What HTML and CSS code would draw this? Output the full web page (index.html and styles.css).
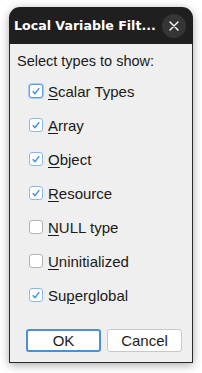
FILE: index.html
```html
<!DOCTYPE html>
<html>
<head>
<meta charset="utf-8">
<link rel="stylesheet" href="styles.css">
</head>
<body>
<div class="window">
  <div class="titlebar">
    <span class="title">Local Variable Filt...</span>
    <span class="close"><svg width="10" height="10" viewBox="0 0 10 10"><path d="M1 1 L9 9 M9 1 L1 9" stroke="#fff" stroke-width="1.4" stroke-linecap="round"/></svg></span>
  </div>
  <div class="body">
    <div class="prompt">Select types to show:</div>
    <div class="list">
      <div class="row"><span class="box checked focus"><svg viewBox="0 0 14 14"><path d="M3.2 7.2 L5.8 10 L10.8 3.6" fill="none" stroke="#3a8ee6" stroke-width="1.6"/></svg></span><span class="label"><u>S</u>calar Types</span></div>
      <div class="row"><span class="box checked"><svg viewBox="0 0 14 14"><path d="M3.2 7.2 L5.8 10 L10.8 3.6" fill="none" stroke="#3a8ee6" stroke-width="1.6"/></svg></span><span class="label"><u>A</u>rray</span></div>
      <div class="row"><span class="box checked"><svg viewBox="0 0 14 14"><path d="M3.2 7.2 L5.8 10 L10.8 3.6" fill="none" stroke="#3a8ee6" stroke-width="1.6"/></svg></span><span class="label"><u>O</u>bject</span></div>
      <div class="row"><span class="box checked"><svg viewBox="0 0 14 14"><path d="M3.2 7.2 L5.8 10 L10.8 3.6" fill="none" stroke="#3a8ee6" stroke-width="1.6"/></svg></span><span class="label"><u>R</u>esource</span></div>
      <div class="row"><span class="box"></span><span class="label"><u>N</u>ULL type</span></div>
      <div class="row"><span class="box"></span><span class="label"><u>U</u>ninitialized</span></div>
      <div class="row"><span class="box checked"><svg viewBox="0 0 14 14"><path d="M3.2 7.2 L5.8 10 L10.8 3.6" fill="none" stroke="#3a8ee6" stroke-width="1.6"/></svg></span><span class="label">Su<u>p</u>erglobal</span></div>
    </div>
    <div class="buttons">
      <button class="btn default">OK</button>
      <button class="btn">Cancel</button>
    </div>
  </div>
</div>
</body>
</html>
```

FILE: styles.css
```css
html, body {
  margin: 0;
  padding: 0;
  background: #ffffff;
}
body {
  width: 202px;
  height: 373px;
  overflow: hidden;
  font-family: "Liberation Sans", Arial, sans-serif;
}
.window {
  margin: 7px 0 0 9px;
  width: 184px;
  height: 356px;
  display: flex;
  flex-direction: column;
  border-radius: 12px 12px 0 0;
  box-shadow: 0 2px 10px rgba(0,0,0,0.35);
}
.titlebar {
  height: 37px;
  background: #1f1f1f;
  border-radius: 11px 11px 0 0;
  display: flex;
  align-items: center;
  justify-content: space-between;
  padding: 0 7px 0 5px;
  box-sizing: border-box;
}
.title {
  color: #ffffff;
  font-family: "DejaVu Sans", sans-serif;
  font-weight: bold;
  font-size: 12.6px;
  letter-spacing: 0;
}
.close {
  width: 24px;
  height: 24px;
  border-radius: 50%;
  background: #353535;
  display: flex;
  align-items: center;
  justify-content: center;
  margin-top: 1px;
}
.close svg { display: block; }
.body {
  flex: 1;
  background: #efefef;
  border: 1px solid #2a2a2a;
  border-top: none;
  display: flex;
  flex-direction: column;
  padding: 8px 10px 10px 7px;
}
.prompt {
  font-size: 14.5px;
  color: #1a1a1a;
  line-height: 18px;
}
.list {
  display: flex;
  flex-direction: column;
  gap: 14px;
  margin-top: 11px;
  padding-left: 12px;
}
.row {
  display: flex;
  align-items: center;
  gap: 5px;
  height: 20px;
}
.box {
  width: 14px;
  height: 14px;
  box-sizing: border-box;
  border: 1px solid #b4b4b4;
  border-radius: 3px;
  background: #ffffff;
  flex: none;
}
.box svg { width: 12px; height: 12px; display: block; }
.box.checked { border-color: #8ab8ea; }
.box.focus { border: 1px solid #5c9fe6; box-shadow: 0 0 0 1px #a8ccf2; }
.label {
  font-size: 15px;
  color: #1a1a1a;
}
.label u { text-decoration-thickness: 1px; text-underline-offset: 2px; }
.buttons {
  margin-top: auto;
  display: flex;
  justify-content: flex-end;
  gap: 6px;
}
.btn {
  width: 75px;
  height: 23px;
  background: #ffffff;
  border: 1px solid #c8c8c8;
  border-radius: 3px;
  font-family: "Liberation Sans", Arial, sans-serif;
  font-size: 15px;
  color: #1a1a1a;
  padding: 0;
}
.btn.default { border: 2px solid #4a90d9; }
```
